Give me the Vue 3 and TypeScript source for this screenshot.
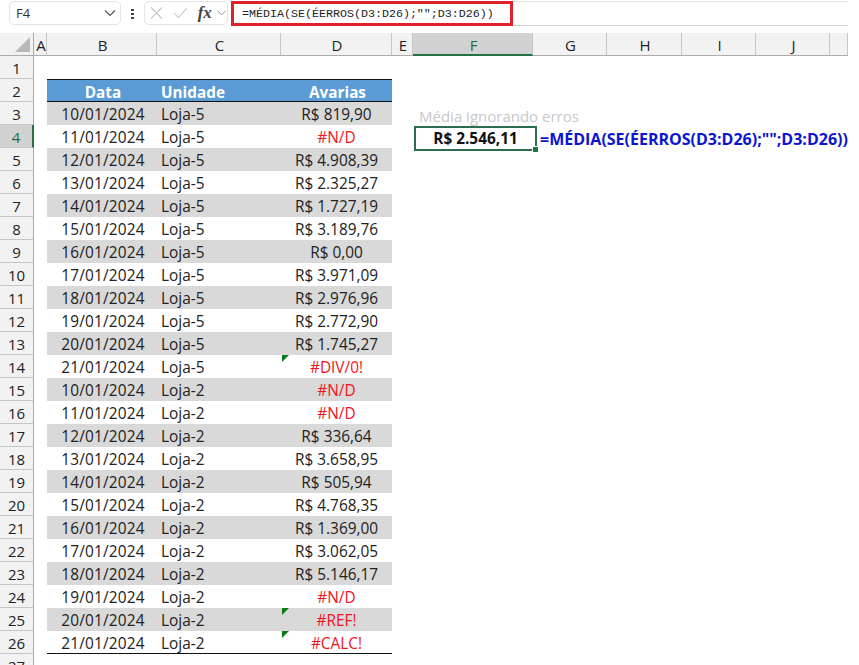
<script setup lang="ts">
type Row = { date: string; store: string; value: string; error?: boolean; flag?: boolean }

const columns = ['A', 'B', 'C', 'D', 'E', 'F', 'G', 'H', 'I', 'J', '']

const rows: Row[] = [
  { date: '10/01/2024', store: 'Loja-5', value: 'R$ 819,90' },
  { date: '11/01/2024', store: 'Loja-5', value: '#N/D', error: true },
  { date: '12/01/2024', store: 'Loja-5', value: 'R$ 4.908,39' },
  { date: '13/01/2024', store: 'Loja-5', value: 'R$ 2.325,27' },
  { date: '14/01/2024', store: 'Loja-5', value: 'R$ 1.727,19' },
  { date: '15/01/2024', store: 'Loja-5', value: 'R$ 3.189,76' },
  { date: '16/01/2024', store: 'Loja-5', value: 'R$ 0,00' },
  { date: '17/01/2024', store: 'Loja-5', value: 'R$ 3.971,09' },
  { date: '18/01/2024', store: 'Loja-5', value: 'R$ 2.976,96' },
  { date: '19/01/2024', store: 'Loja-5', value: 'R$ 2.772,90' },
  { date: '20/01/2024', store: 'Loja-5', value: 'R$ 1.745,27' },
  { date: '21/01/2024', store: 'Loja-5', value: '#DIV/0!', error: true, flag: true },
  { date: '10/01/2024', store: 'Loja-2', value: '#N/D', error: true },
  { date: '11/01/2024', store: 'Loja-2', value: '#N/D', error: true },
  { date: '12/01/2024', store: 'Loja-2', value: 'R$ 336,64' },
  { date: '13/01/2024', store: 'Loja-2', value: 'R$ 3.658,95' },
  { date: '14/01/2024', store: 'Loja-2', value: 'R$ 505,94' },
  { date: '15/01/2024', store: 'Loja-2', value: 'R$ 4.768,35' },
  { date: '16/01/2024', store: 'Loja-2', value: 'R$ 1.369,00' },
  { date: '17/01/2024', store: 'Loja-2', value: 'R$ 3.062,05' },
  { date: '18/01/2024', store: 'Loja-2', value: 'R$ 5.146,17' },
  { date: '19/01/2024', store: 'Loja-2', value: '#N/D', error: true },
  { date: '20/01/2024', store: 'Loja-2', value: '#REF!', error: true, flag: true },
  { date: '21/01/2024', store: 'Loja-2', value: '#CALC!', error: true, flag: true },
]

const formula = '=MÉDIA(SE(ÉERROS(D3:D26);"";D3:D26))'
</script>

<template>
  <div class="excel">
    <div class="formula-bar">
      <div class="name-box">
        <span>F4</span>
        <svg width="12" height="8" viewBox="0 0 12 8"><path d="M1 1.5 6 6.5 11 1.5" fill="none" stroke="#555" stroke-width="1.2" /></svg>
      </div>
      <div class="dots"><i></i><i></i><i></i></div>
      <div class="fx-box">
        <svg width="14" height="14" viewBox="0 0 14 14"><path d="M1 1 13 13M13 1 1 13" fill="none" stroke="#bdbdbd" stroke-width="1.1" /></svg>
        <svg width="16" height="12" viewBox="0 0 16 12"><path d="M1 6 6 11 15 1" fill="none" stroke="#c4c4c4" stroke-width="1.1" /></svg>
        <span class="fx">fx</span>
        <svg width="10" height="6" viewBox="0 0 10 6"><path d="M.5.5 5 5 9.500.5" fill="none" stroke="#888" stroke-width="1" /></svg>
      </div>
      <div class="formula-input">{{ formula }}</div>
      <div class="formula-rest"></div>
    </div>

    <div class="sheet">
      <div class="corner"><span class="corner-tri"></span></div>
      <div v-for="col in columns" :key="col" class="col-head" :class="{ active: col === 'F' }">{{ col }}</div>

      <template v-for="n in 27" :key="n">
        <div class="row-head" :class="{ active: n === 4 }">{{ n }}</div>
        <div class="cell"></div>

        <template v-if="n === 2">
          <div class="cell head shifted">Data</div>
          <div class="cell head left">Unidade</div>
          <div class="cell head shifted">Avarias</div>
        </template>
        <template v-else-if="n >= 3 && n <= 26">
          <div class="cell date shifted" :class="{ band: n % 2 === 1, last: n === 26 }">{{ rows[n - 3].date }}</div>
          <div class="cell left" :class="{ band: n % 2 === 1, last: n === 26 }">{{ rows[n - 3].store }}</div>
          <div class="cell value" :class="{ band: n % 2 === 1, error: rows[n - 3].error, last: n === 26 }">
            <span v-if="rows[n - 3].flag" class="flag"></span>
            {{ rows[n - 3].value }}
          </div>
        </template>
        <template v-else>
          <div class="cell"></div>
          <div class="cell"></div>
          <div class="cell"></div>
        </template>

        <div class="cell"></div>
        <div v-if="n === 3" class="cell note">Média ignorando erros</div>
        <div v-else-if="n === 4" class="cell selected">R$ 2.546,11<span class="handle"></span></div>
        <div v-else class="cell"></div>
        <div v-if="n === 4" class="cell shown-formula">{{ formula }}</div>
        <div v-else class="cell"></div>
        <div class="cell"></div>
        <div class="cell"></div>
        <div class="cell"></div>
        <div class="cell"></div>
      </template>
    </div>
  </div>
</template>

<style scoped>
.excel {
  width: 859px;
  height: 665px;
  overflow: hidden;
  background: #fff;
  font-family: "Open Sans", "Noto Sans", sans-serif;
  color: #222;
}

.formula-bar {
  display: flex;
  align-items: flex-start;
  width: 848px;
  height: 33px;
  box-sizing: border-box;
  padding: 1px 0 0 9px;
}

.name-box {
  display: flex;
  align-items: center;
  justify-content: space-between;
  box-sizing: border-box;
  width: 112px;
  height: 24px;
  padding: 0 4px 0 6px;
  border: 1px solid #e4e4e4;
  border-radius: 5px;
  font-size: 13px;
  color: #333;
}

.dots {
  display: flex;
  flex-direction: column;
  gap: 2px;
  width: 3px;
  margin: 8px 10px 0 10px;
}

.dots i {
  width: 3px;
  height: 2px;
  background: #444;
}

.fx-box {
  display: flex;
  align-items: center;
  gap: 10px;
  box-sizing: border-box;
  width: 84px;
  height: 24px;
  padding: 0 1px 0 5px;
  border: 1px solid #e4e4e4;
  border-radius: 5px;
}

.fx {
  margin: 0 -5px 0 0;
  font-family: "Liberation Serif", serif;
  font-size: 17px;
  font-style: italic;
  font-weight: 700;
  color: #444;
}

.formula-input {
  box-sizing: border-box;
  width: 282px;
  height: 25px;
  margin-left: 3px;
  padding-left: 8px;
  border: 3px solid #e0202c;
  background: #fff;
  font-family: "Liberation Mono", monospace;
  font-size: 11.67px;
  line-height: 20px;
  color: #222;
  white-space: pre;
}

.formula-rest {
  flex: 1;
  height: 25px;
  box-sizing: border-box;
  border-top: 1px solid #e2e2e2;
  border-bottom: 1px solid #d4d4d4;
}

.sheet {
  display: grid;
  grid-template-columns: 34px 13px 110px 124px 111px 21px 120px 74px 75px 74px 74px 18px;
  grid-auto-rows: 23px;
  width: 848px;
}

.corner {
  position: relative;
  background: #f2f2f2;
  border-bottom: 1px solid #ababab;
  border-right: 1px solid #ababab;
  box-sizing: border-box;
}

.corner-tri {
  position: absolute;
  right: 3px;
  bottom: 3px;
  border-left: 15px solid transparent;
  border-bottom: 15px solid #b8b8b8;
}

.col-head {
  display: flex;
  align-items: center;
  justify-content: center;
  box-sizing: border-box;
  padding: 2px 0 0 2px;
  background: #f2f2f2;
  border-bottom: 1px solid #ababab;
  border-right: 1px solid #c6c6c6;
  font-size: 15px;
  color: #222;
}

.col-head.active {
  background: #d2d2d2;
  border-bottom: 2px solid #217346;
  color: #1f6b43;
}

.row-head {
  display: flex;
  align-items: center;
  justify-content: center;
  box-sizing: border-box;
  padding-top: 2px;
  background: #f2f2f2;
  border-right: 1px solid #ababab;
  border-bottom: 1px solid #c6c6c6;
  font-size: 15px;
  color: #222;
}

.row-head.active {
  background: #d2d2d2;
  border-right: 2px solid #217346;
  color: #1f6b43;
}

.cell {
  position: relative;
  display: flex;
  align-items: center;
  justify-content: center;
  box-sizing: border-box;
  min-width: 0;
  padding-top: 2px;
  font-size: 15.4px;
  white-space: nowrap;
}

.date {
  letter-spacing: 0.2px;
}

.shifted {
  padding-left: 2px;
}

.left {
  justify-content: flex-start;
  padding-left: 4px;
}

.band {
  background: #d9d9d9;
}

.head {
  background: #5b9bd5;
  border-top: 1px solid #111;
  border-bottom: 1px solid #111;
  font-size: 15.3px;
  font-weight: 700;
  color: #fff;
}

.error {
  color: #f0141e;
}

.last {
  border-bottom: 1px solid #111;
}

.flag {
  position: absolute;
  top: 0;
  left: 1px;
  border-top: 7px solid #0a7a14;
  border-right: 7px solid transparent;
}

.note {
  justify-content: flex-start;
  padding: 4px 0 0 6px;
  font-size: 15px;
  color: #c8c8c8;
}

.selected {
  z-index: 1;
  width: 123px;
  height: 25px;
  margin: 1px 0 0 1px;
  padding-top: 0;
  border: 2px solid #2f6b4f;
  font-size: 15.4px;
  font-weight: 700;
  color: #111;
}

.handle {
  position: absolute;
  right: -4px;
  bottom: -4px;
  width: 5px;
  height: 5px;
  background: #217346;
  border: 1px solid #fff;
}

.shown-formula {
  justify-content: flex-start;
  padding: 4px 0 0 7px;
  font-size: 16px;
  font-weight: 700;
  color: #0a14d2;
}
</style>

<style>
html,
body {
  margin: 0;
  background: #fff;
}
</style>
